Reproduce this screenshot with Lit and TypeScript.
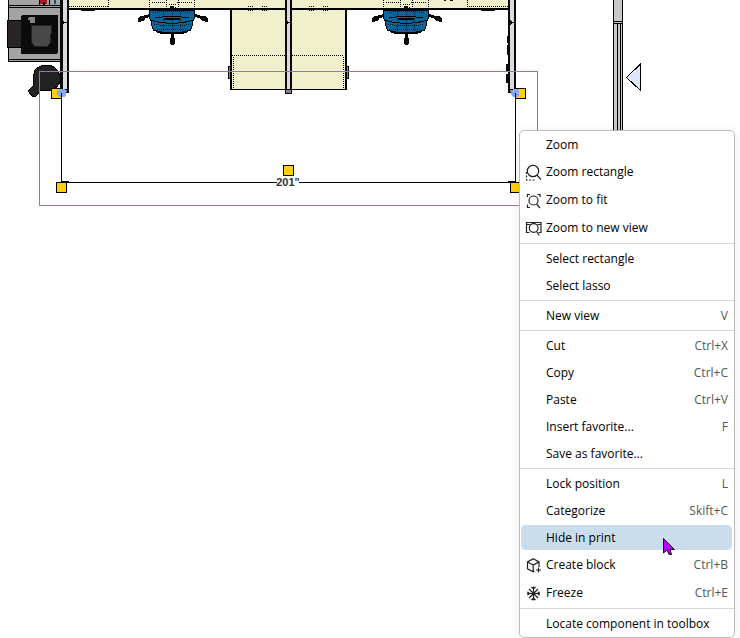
import { LitElement, html, css, svg, nothing } from "lit";
import { customElement } from "lit/decorators.js";

type Item = { label: string; icon?: string; keys?: string; active?: boolean };

const groups: Item[][] = [
  [
    { label: "Zoom" },
    { label: "Zoom rectangle", icon: "rect" },
    { label: "Zoom to fit", icon: "fit" },
    { label: "Zoom to new view", icon: "view" },
  ],
  [{ label: "Select rectangle" }, { label: "Select lasso" }],
  [{ label: "New view", keys: "V" }],
  [
    { label: "Cut", keys: "Ctrl+X" },
    { label: "Copy", keys: "Ctrl+C" },
    { label: "Paste", keys: "Ctrl+V" },
    { label: "Insert favorite...", keys: "F" },
    { label: "Save as favorite..." },
  ],
  [
    { label: "Lock position", keys: "L" },
    { label: "Categorize", keys: "Skift+C" },
    { label: "Hide in print", active: true },
    { label: "Create block", icon: "block", keys: "Ctrl+B" },
    { label: "Freeze", icon: "freeze", keys: "Ctrl+E" },
  ],
  [{ label: "Locate component in toolbox" }],
];

const icons: Record<string, unknown> = {
  rect: svg`<circle cx="8" cy="7" r="5.7"/><path d="M12 11.200l4 4.300"/><path d="M1.500 8v8H10" stroke-dasharray="2 1.500"/>`,
  fit: svg`<circle cx="8.500" cy="8.500" r="4.500"/><path d="M11.600 12l3.400 4M2.500 5V2.500H5M12.500 2.500H15V5M2.500 12.500V15.500H5"/>`,
  view: svg`<path d="M4.500 12.500H1.500V2.500h14.500v10h-2.500M1.500 4.500h3.500M12.500 4.500h3.500"/><circle cx="8.700" cy="8" r="4.400"/><path d="M11.600 11.500l2.700 3.800"/>`,
  block: svg`<path d="M9.500 14l-1.300.8L2.500 11.800V4.900l5.700-3.200 5.800 3.200v5M2.500 4.900l5.700 3.200 5.800-3.200M8.200 8.100v6.700M13.500 10.500v5M11 13h5"/>`,
  freeze: svg`<path d="M8.500 1.500v14M2 8.500h13M4 4l9 9M13 4l-9 9M6.500 2l2 2 2-2M6.500 15l2-2 2 2M2.500 6.800L4.400 8.500l-1.900 1.700M14.500 6.800L12.600 8.500l1.900 1.700"/>`,
};

const chair = (x: number) => svg`
  <g transform="translate(${x} 0)">
    <path class="desk-dots" d="M-22.5 0V8M22.5 0V8M-20 2.5H-4M5 2.5H20M-5.5 0V8M6.5 0V8M-3 4.5H5M-1 7.5H4"/>
    <path class="ink" d="M-2 6h4v3h-4z"/>
    <path class="seat" d="M-22.5 10H22.5V18L20.5 22V25L18.5 30L14 31.5Q0 34-14 31.5L-18.5 30L-20.5 25V22L-22.5 18Z"/>
    <path class="seams" d="M-19 13Q0 9 19 13M-18 24Q0 28 18 24M-8.5 10V31M8.5 10V31M-15 29Q0 30 15 29M.5 10V32"/>
    <path class="line" d="M-22 20Q0 27 22 20M-17 18Q0 15 17 18"/>
    <path class="heavy" d="M-8 18.5H8M-15 32Q0 35 15 32"/>
    <path class="leg" d="M.5 34V40M-22 15.5L-29 17.5M23 15.5L30 17.5"/>
    <path class="ink" d="M-2 38h5v5l-1 2h-3l-1-2zM-34 18l3-2h4v4l-5 2h-2zM36 18l-3-2h-4v4l5 2h2z"/>
  </g>`;

@customElement("app-root")
export class AppRoot extends LitElement {
  static styles = css`
    :host {
      display: block;
      position: relative;
      min-height: 100vh;
      overflow: hidden;
      background: #fff;
      color: #000;
      font: 12px/16px "Open Sans", "Noto Sans", sans-serif;
    }
    .plan { display: block; }
    .crisp { shape-rendering: crispEdges; }
    .desk { fill: #f0f0cc; }
    .ink { fill: #0a0a0a; }
    .panel { fill: #dcdadf; }
    .metal { fill: #a3a3a3; }
    .column { fill: #c9c9c9; }
    .edge { fill: #858585; stroke: #000; }
    .line { fill: none; stroke: #000; }
    .heavy { fill: none; stroke: #000; stroke-width: 2; }
    .leg { fill: none; stroke: #000; stroke-width: 3; }
    .dots, .desk-dots { fill: none; stroke: #000; stroke-dasharray: 1 1; }
    .seat { fill: #09659a; stroke: #000; }
    .seams { fill: none; stroke: #001b30; stroke-dasharray: 1 1; }
    .bin { fill: #222; stroke: #000; }
    .device { fill: #0b0b0b; }
    .slot { fill: #292525; stroke: #000; }
    .tray { fill: #484848; stroke: #222; }
    .knob { fill: #858585; }
    .red { fill: #a91521; }
    .blue { fill: #174f94; }
    .select { fill: none; stroke: #9c70b4; }
    .grip { fill: #fdd009; stroke: #000; }
    .snap { fill: #83abf8; }
    .marker { fill: #dce7fc; stroke: #000; }
    .halo { fill: #fff; }
    .measure { font: bold 11px "Liberation Sans", sans-serif; fill: #333; text-anchor: middle; }
    .menu {
      position: absolute;
      top: 130px;
      right: 5px;
      width: 216px;
      box-sizing: border-box;
      background: #fff;
      border: 1px solid #bcbcbc;
      border-radius: 5px;
      box-shadow: 0 2px 12px rgba(0, 0, 0, 0.08);
    }
    .group + .group { border-top: 1px solid #d8d8d8; margin-top: 1px; padding-top: 1px; }
    .item {
      display: grid;
      grid-template-columns: 24px 1fr auto;
      align-items: center;
      width: calc(100% - 3px);
      height: 27px;
      margin: 0 2px 0 1px;
      padding: 0 4px 0 1px;
      border: 1px solid transparent;
      border-width: 1px 0;
      border-radius: 5px;
      background: transparent;
      background-clip: padding-box;
      color: inherit;
      font: inherit;
      text-align: left;
      white-space: nowrap;
    }
    .item.tall { height: 28px; }
    .item.active { background-color: #cadded; }
    .icon { width: 17px; height: 17px; margin-left: 3px; fill: none; stroke: #222; stroke-width: 1.2; }
    .label { grid-column: 2; }
    .keys { grid-column: 3; color: #555; }
    .pointer { position: absolute; left: 142px; top: 405px; fill: #b800ff; stroke: #111; pointer-events: none; }
  `;

  private plan() {
    return html`<svg class="plan" width="740" height="215" viewBox="0 0 740 215" role="img" aria-label="Floor plan">
      <g class="crisp">
        <path class="metal" d="M8 0H62V62H8Z"/>
        <path class="line" d="M8.500 0V61.500H61M8 5.500H61M8 7.500H61M8 59.500H61M39.500 0V5M49.500 0V5"/>
        <path class="red" d="M40 0h7v4h-7z"/><path class="ink" d="M43 2h2v3h-2z"/><path class="blue" d="M54 0h2v4h-2z"/>
        <rect class="slot" x="7.500" y="20.500" width="14" height="27"/>
        <rect class="device" x="21" y="15" width="37" height="39" rx="2"/>
        <path class="tray" d="M31 25H52L50 43L48 46H34L32 43Z"/>
        <path class="knob" d="M29 17h6v6h-5v-3h-2z"/>

        <path class="desk" d="M69 0H511V9H69Z M231 9H347V89H231Z"/>
        <path class="heavy" d="M69 9H511"/>
        <path class="dots" d="M69 6.500H108M108.500 0V7M467 6.500H508M467.500 0V7"/>
        <path class="ink" d="M81 10h14v1H81z M481 10h14v1h-14z M444 0h2v1h-2z M450 0h3v1h-3z"/>
        <path class="dots" d="M248 6.500H254M262 6.500H267M309 6.500H315M323 6.500H328M248 10.500H254M262 10.500H267M309 10.500H315M323 10.500H328"/>
        <path class="edge" d="M228.500 66.500h2v12h-2zM346.500 66.500h2v12h-2z"/>
        <path class="heavy" d="M231 10V90M346 10V90"/>
        <path class="line" d="M231 89.500H347"/>
        <path class="dots" d="M232 55.500H344M233.500 57V88M343.500 57V88"/>

        <path class="ink" d="M60 0h9v93h-9z M285 0h7v89h-7z M508 0h8v93h-8z"/>
        <path class="panel" d="M63 0h4v90h-4z M287 0h3v89h-3z M510 0h4v90h-4z"/>
        <path class="ink" d="M62 20l3 2h3v1h-3l-3 2z M286 20l3 2h2v1h-2l-3 2z M510 20l3 2h2v1h-2l-3 2z M507 36h2v7h-2z M507 45h2v10h-2z M506 64h3v8h-3z M506 74h3v9h-3z"/>
        <path class="edge" d="M62.500 89.500h5v3h-5z M285.500 89.500h6v4h-6z M509.500 89.500h5v3h-5z"/>
        ${chair(172)}${chair(406)}

        <path class="column" d="M613 0h10v131h-10z"/>
        <path class="line" d="M613.500 0V131M622.500 0V131M613 21.500H623M613 23.500H623M617.500 24V131M620.500 24V131"/>
        <path class="marker" d="M626.500 77.500L640.500 64V90.500Z"/>
        <path class="bin" d="M35 70l4-3 5-2h5l5 2 4 4 2 5v6l-3 5-5 3h-9l-3 1-4 5-3 1-5-6 5-5v-8z"/>

        <rect class="select" x="39.500" y="71.500" width="498" height="134"/>
        <rect class="grip" x="51.500" y="88.500" width="10" height="10"/>
        <rect class="grip" x="515.500" y="88.500" width="10" height="10"/>
        <path class="snap" d="M60 89h4l2 2v4l-2 2h-4l-3-2v-4z M513 89h4l2 2v4l-2 2h-4l-2-2v-4z"/>
        <path class="line" d="M61.500 93V183M515.500 93V183M64 182.500H512"/>
        <path class="heavy" d="M62 182H69M508 182H515"/>
        <rect class="grip" x="56.500" y="182.500" width="10" height="10"/>
        <rect class="grip" x="510.500" y="182.500" width="10" height="10"/>
        <rect class="grip" x="283.500" y="165.500" width="10" height="10"/>
        <path class="halo" d="M277 177h22v11h-22z"/>
      </g>
      <text class="measure" x="288" y="186">201"</text>
    </svg>`;
  }

  private item(i: Item) {
    return html`<button role="menuitem" class="item ${i.icon ? "tall" : ""} ${i.active ? "active" : ""}">
      ${i.icon ? html`<svg class="icon" viewBox="0 0 17 17" aria-hidden="true">${icons[i.icon]}</svg>` : nothing}
      <span class="label">${i.label}</span>
      ${i.keys ? html`<span class="keys">${i.keys}</span>` : nothing}
    </button>`;
  }

  render() {
    return html`${this.plan()}
      <div class="menu" role="menu">
        ${groups.map((g) => html`<div class="group" role="group">${g.map((i) => this.item(i))}</div>`)}
        <svg class="pointer" width="14" height="20" viewBox="0 0 14 20" aria-hidden="true">
          <path d="M1.500 2.500V17L5 14L7 18.500H9.500L8 13.500H12.500Z"/>
        </svg>
      </div>`;
  }
}
